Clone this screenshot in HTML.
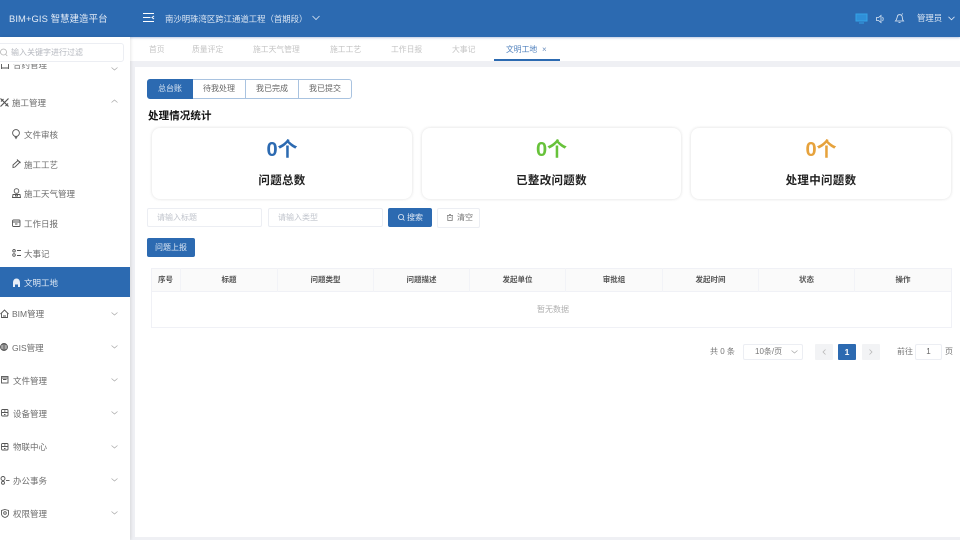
<!DOCTYPE html>
<html lang="zh"><head><meta charset="utf-8"><title>BIM+GIS 智慧建造平台</title>
<style>
*{box-sizing:border-box;margin:0;padding:0}
html,body{width:960px;height:540px;overflow:hidden;background:#eff0f4;font-family:"Liberation Sans","Noto Sans CJK SC",sans-serif}
#root{position:absolute;left:0;top:0;width:960px;height:540px;overflow:hidden;filter:blur(.3px)}
.a{position:absolute;white-space:nowrap}
svg{position:absolute;overflow:visible;fill:none}
#content{position:absolute;left:135px;top:67px;width:825px;height:470px;background:#fff}
#side{position:absolute;left:0;top:37px;width:130px;height:503px;background:#fff;box-shadow:1px 0 3px rgba(0,0,0,.1);overflow:hidden}
#hdr{position:absolute;left:0;top:0;width:960px;height:37px;background:#2c6ab1;box-shadow:0 1px 2px rgba(40,80,160,.3)}
#tabs{position:absolute;left:130px;top:37px;width:830px;height:24px;background:#fff}
.tab{position:absolute;top:7px;font-size:7.8px;line-height:11px;color:#c4c4c4}
.m{position:absolute;font-size:8.5px;line-height:12px;color:#6c6c6c;white-space:nowrap}
.ic{stroke:#555;stroke-width:.9}
.ar{stroke:#aaa;stroke-width:.7}
.card{position:absolute;top:128px;height:71px;background:#fff;border-radius:8px;box-shadow:0 0 3px rgba(0,0,0,.14)}
.num{position:absolute;left:0;right:0;top:9px;text-align:center;font-size:20px;line-height:26px;font-weight:700}
.lab{position:absolute;left:0;right:0;top:45px;text-align:center;font-size:11.5px;line-height:16px;font-weight:700;color:#222;letter-spacing:.3px}
.seg{position:absolute;top:79px;height:20px;border:1px solid #a9c3e0;border-left:0;background:#fff;color:#666;font-size:8px;line-height:18px;text-align:center}
.inp{position:absolute;top:208px;width:115px;height:19px;border:1px solid #eceef3;border-radius:2px;font-size:8px;line-height:17px;color:#c0c4cc;padding-left:9px;background:#fff}
.th{position:absolute;top:268px;height:24px;font-size:7.5px;font-weight:700;color:#555;line-height:24px;text-align:center;border-right:1px solid #f2f3f7}
</style></head>
<body>
<div id="root">
<div id="content"></div>

<div id="tabs">
<span class="tab" style="left:19px">首页</span>
<span class="tab" style="left:62px">质量评定</span>
<span class="tab" style="left:123px">施工天气管理</span>
<span class="tab" style="left:200px">施工工艺</span>
<span class="tab" style="left:261px">工作日报</span>
<span class="tab" style="left:322px">大事记</span>
<span class="tab" style="left:376px;color:#4f80bd">文明工地</span>
<span class="tab" style="left:412px;color:#6d8fbd;font-size:8px">×</span>
<div class="a" style="left:364px;top:22px;width:66px;height:2px;background:#2c6ab1"></div>
</div>

<div id="hdr">
<span class="a" style="left:9px;top:12px;font-size:9.4px;line-height:14px;color:#e4ecf6;letter-spacing:.1px">BIM+GIS 智慧建造平台</span>
<svg style="left:143px;top:13px" width="12" height="10" stroke="#fff" stroke-width="1"><path d="M0 .5H11M0 4.500H7.500M0 8.500H11M11 3 9 4.500 11 6"/></svg>
<span class="a" style="left:165px;top:12px;font-size:8.4px;line-height:14px;color:#dbe6f3">南沙明珠湾区跨江通道工程（首期段）</span>
<svg style="left:312px;top:15px" width="8" height="6" stroke="#dbe6f3" stroke-width=".8"><path d="M.5 1 4 4.500 7.500 1"/></svg>
<svg style="left:856px;top:14px" width="11" height="10"><path d="M0 0H11V7H0ZM3 9H8" stroke="#34a3e6" stroke-width="1" fill="#2f8fd8"/></svg>
<svg style="left:876px;top:15px" width="9" height="8" stroke="#dbe6f3" stroke-width=".8"><path d="M.5 2.500H2.500L5 .5V7.500L2.500 5.500H.5ZM6.500 2C7.400 3 7.400 5 6.500 6"/></svg>
<svg style="left:895px;top:13px" width="9" height="10" stroke="#e6edf6" stroke-width=".8"><path d="M.5 8H8.500C7 6.500 7.500 4.500 7 3 6.500 1.500 3 1 2.500 3 2 4.500 2 6.500.5 8ZM3.500 9.500H5.500M6.800 1.500l1-1"/></svg>
<span class="a" style="left:917px;top:11px;font-size:8.4px;line-height:14px;color:#dbe6f3">管理员</span>
<svg style="left:948px;top:16px" width="7" height="5" stroke="#dbe6f3" stroke-width=".8"><path d="M.5.800 3.500 3.800 6.500.800"/></svg>
</div>

<div id="side">
<div class="a" style="left:-5px;top:6px;width:129px;height:19px;border:1px solid #eceef3;border-radius:3px;background:#fff"></div>
<svg style="left:0;top:11px" width="8" height="9" stroke="#b5b5b5" stroke-width=".8"><circle cx="3.500" cy="4" r="3"/><path d="M5.800 6.500 7.300 8"/></svg>
<span class="a" style="left:11px;top:10px;font-size:8px;line-height:11px;color:#b5b8bf">输入关键字进行过滤</span>

<span class="m" style="left:13px;top:27px;height:5px;overflow:hidden;line-height:2px">合约管理</span>
<svg class="ic" style="left:1px;top:27px" width="8" height="5"><path d="M.5 5V0M7.500 5V0M.5 4H7.500"/></svg>
<svg class="ar" style="left:111px;top:30px" width="7" height="4"><path d="M.5.500 3.500 3 6.500.500"/></svg>

<svg class="ic" style="left:0;top:61px;stroke:#555;stroke-width:1.200" width="9" height="9"><path d="M.5.500 8.500 8.500M8.500.500 .5 8.500M1 3.500 3.500 1M5.500 8 8 5.500"/></svg>
<span class="m" style="left:12px;top:60px">施工管理</span>
<svg class="ar" style="left:111px;top:62px" width="7" height="4"><path d="M.5 3.500 3.500 1 6.500 3.500"/></svg>

<svg class="ic" style="left:12px;top:92px" width="8" height="10"><circle cx="4" cy="4" r="3.400"/><path d="M2.800 7.500 4 9.500 5.200 7.500"/></svg>
<span class="m" style="left:24px;top:92px">文件审核</span>
<svg class="ic" style="left:12px;top:122px" width="9" height="9"><path d="M1 8.500V6L6 1.500 8 3 3 8ZM5 .5 8.500 4"/></svg>
<span class="m" style="left:24px;top:122px">施工工艺</span>
<svg class="ic" style="left:12px;top:151px" width="9" height="10"><circle cx="4.500" cy="3" r="2.300"/><path d="M1 6.500H8L8.500 9.500H.5ZM3.500 6V8H5.500V6"/></svg>
<span class="m" style="left:24px;top:151px">施工天气管理</span>
<svg class="ic" style="left:12px;top:182px" width="9" height="8"><rect x=".5" y="1" width="7.500" height="6.500" rx="1"/><path d="M.5 3H8M3 5H5.500"/></svg>
<span class="m" style="left:24px;top:181px">工作日报</span>
<svg class="ic" style="left:12px;top:212px" width="9" height="8"><path d="M5 1.500H9M5 6.500H9"/><circle cx="2" cy="1.800" r="1.300"/><circle cx="2" cy="6" r="1.300"/></svg>
<span class="m" style="left:24px;top:211px">大事记</span>

<div class="a" style="left:0;top:230px;width:130px;height:30px;background:#2c6ab1"></div>
<svg style="left:12px;top:241px" width="9" height="9"><path d="M1 9V5C1 2 2.500.5 4.500.5S8 2 8 5V9H6V6.500H3V9Z" fill="#e8eef7"/></svg>
<span class="m" style="left:24px;top:240px;color:#dfe9f5">文明工地</span>

<svg class="ic" style="left:0;top:272px" width="9" height="9"><path d="M.5 5 4.500 1 8.500 5M1.500 4.500V8.500H7.500V4.500M3 7H6"/></svg>
<span class="m" style="left:12px;top:271px">BIM管理</span>
<svg class="ar" style="left:111px;top:275px" width="7" height="4"><path d="M.5.500 3.500 3 6.500.500"/></svg>

<svg class="ic" style="left:0;top:306px" width="8" height="8"><circle cx="4" cy="4" r="3.500"/><path d="M.5 4H7.500M4 .5V7.500M1 2H7M1 6H7"/></svg>
<span class="m" style="left:12px;top:305px">GIS管理</span>
<svg class="ar" style="left:111px;top:308px" width="7" height="4"><path d="M.5.500 3.500 3 6.500.500"/></svg>

<svg class="ic" style="left:1px;top:339px" width="8" height="8"><rect x=".5" y=".5" width="6.500" height="6.500"/><path d="M2 3.500H5.500M.5 2H7"/></svg>
<span class="m" style="left:13px;top:338px">文件管理</span>
<svg class="ar" style="left:111px;top:341px" width="7" height="4"><path d="M.5.500 3.500 3 6.500.500"/></svg>

<svg class="ic" style="left:1px;top:372px" width="8" height="8"><rect x=".5" y=".5" width="6.500" height="6.500" rx="1"/><path d="M.5 3.500H7M3 2H4.500M3 5.500H4.500"/></svg>
<span class="m" style="left:13px;top:371px">设备管理</span>
<svg class="ar" style="left:111px;top:374px" width="7" height="4"><path d="M.5.500 3.500 3 6.500.500"/></svg>

<svg class="ic" style="left:1px;top:406px" width="8" height="8"><rect x=".5" y=".5" width="6.500" height="6.500" rx="1"/><path d="M.5 3.500H7M3 2H4.500M3 5.500H4.500"/></svg>
<span class="m" style="left:13px;top:404px">物联中心</span>
<svg class="ar" style="left:111px;top:408px" width="7" height="4"><path d="M.5.500 3.500 3 6.500.500"/></svg>

<svg class="ic" style="left:0;top:439px" width="10" height="9"><circle cx="3" cy="2.500" r="2"/><circle cx="3" cy="6.800" r="1.500"/><path d="M6 4.500H9.500"/></svg>
<span class="m" style="left:13px;top:438px">办公事务</span>
<svg class="ar" style="left:111px;top:441px" width="7" height="4"><path d="M.5.500 3.500 3 6.500.500"/></svg>

<svg class="ic" style="left:1px;top:472px" width="8" height="9"><path d="M4 .5 7.500 1.500V5C7.500 7 5.500 8 4 8.500 2.500 8 .5 7 .5 5V1.500Z"/><circle cx="4" cy="4" r="1.300"/></svg>
<span class="m" style="left:13px;top:471px">权限管理</span>
<svg class="ar" style="left:111px;top:474px" width="7" height="4"><path d="M.5.500 3.500 3 6.500.500"/></svg>
</div>

<div class="seg" style="left:147px;width:46px;background:#2c6ab1;border:1px solid #2c6ab1;color:#d9e5f3;border-radius:3px 0 0 3px">总台账</div>
<div class="seg" style="left:193px;width:53px">待我处理</div>
<div class="seg" style="left:246px;width:53px">我已完成</div>
<div class="seg" style="left:299px;width:53px;border-radius:0 3px 3px 0">我已提交</div>

<span class="a" style="left:148px;top:109px;font-size:10.500px;line-height:15px;font-weight:700;color:#111;letter-spacing:.1px">处理情况统计</span>

<div class="card" style="left:152px;width:260px"><div class="num" style="color:#2c6ab1">0个</div><div class="lab">问题总数</div></div>
<div class="card" style="left:422px;width:259px"><div class="num" style="color:#67c23a">0个</div><div class="lab">已整改问题数</div></div>
<div class="card" style="left:691px;width:260px"><div class="num" style="color:#e6a23c">0个</div><div class="lab">处理中问题数</div></div>

<div class="inp" style="left:147px">请输入标题</div>
<div class="inp" style="left:268px">请输入类型</div>
<div class="a" style="left:388px;top:208px;width:44px;height:19px;background:#2c6ab1;border-radius:2px;color:#dce7f4;font-size:8px;line-height:19px;padding-left:19px">搜索</div>
<svg style="left:398px;top:214px" width="7" height="7" stroke="#e4ecf6" stroke-width=".8"><circle cx="3" cy="3" r="2.600"/><path d="M5 5 6.500 6.500"/></svg>
<div class="a" style="left:437px;top:208px;width:43px;height:20px;background:#fff;border:1px solid #eceef3;border-radius:2px;color:#777;font-size:8px;line-height:18px;padding-left:19px">清空</div>
<svg style="left:447px;top:214px" width="6" height="7" stroke="#777" stroke-width=".8"><path d="M.8 1.500H5.200V6.500H.8ZM0 1.500H6M2 .5H4M2.200 3.500H3.800"/></svg>

<div class="a" style="left:147px;top:238px;width:48px;height:19px;background:#2c6ab1;border-radius:2px;color:#dce7f4;font-size:8px;line-height:19px;text-align:center">问题上报</div>

<div class="a" style="left:151px;top:268px;width:801px;height:60px;border:1px solid #f0f1f6;background:#fff"></div>
<div class="a" style="left:151px;top:268px;width:801px;height:24px;background:#fafafa;border:1px solid #f0f1f6"></div>
<div class="th" style="left:151px;width:30px">序号</div>
<div class="th" style="left:181px;width:97px">标题</div>
<div class="th" style="left:278px;width:96px">问题类型</div>
<div class="th" style="left:374px;width:96px">问题描述</div>
<div class="th" style="left:470px;width:96px">发起单位</div>
<div class="th" style="left:566px;width:97px">审批组</div>
<div class="th" style="left:663px;width:96px">发起时间</div>
<div class="th" style="left:759px;width:96px">状态</div>
<div class="th" style="left:855px;width:96px;border-right:0">操作</div>
<span class="a" style="left:537px;top:304px;font-size:8px;line-height:11px;color:#b0b0b0">暂无数据</span>

<span class="a" style="left:710px;top:346px;font-size:8px;line-height:12px;color:#777">共 0 条</span>
<div class="a" style="left:743px;top:344px;width:60px;height:16px;border:1px solid #eceef3;border-radius:2px;background:#fff;font-size:8px;line-height:14px;color:#777;padding-left:11px">10条/页</div>
<svg class="ar" style="left:791px;top:350px" width="7" height="4"><path d="M.5.500 3.500 3 6.500.500"/></svg>
<div class="a" style="left:815px;top:344px;width:18px;height:16px;background:#f2f3f5;border-radius:1px"></div>
<svg style="left:822px;top:349px" width="4" height="6" stroke="#b8b8b8" stroke-width=".8"><path d="M3.500.5 1 3 3.500 5.500"/></svg>
<div class="a" style="left:838px;top:344px;width:18px;height:16px;background:#2c6ab1;border-radius:1px;color:#fff;font-size:8.500px;font-weight:700;line-height:16px;text-align:center">1</div>
<div class="a" style="left:862px;top:344px;width:18px;height:16px;background:#f2f3f5;border-radius:1px"></div>
<svg style="left:869px;top:349px" width="4" height="6" stroke="#b8b8b8" stroke-width=".8"><path d="M.5.5 3 3 .5 5.500"/></svg>
<span class="a" style="left:897px;top:346px;font-size:8px;line-height:12px;color:#777">前往</span>
<div class="a" style="left:915px;top:344px;width:27px;height:16px;border:1px solid #eceef3;border-radius:2px;background:#fff;font-size:8px;line-height:14px;color:#666;text-align:center">1</div>
<span class="a" style="left:945px;top:346px;font-size:8px;line-height:12px;color:#777">页</span>
</div>
</body></html>
